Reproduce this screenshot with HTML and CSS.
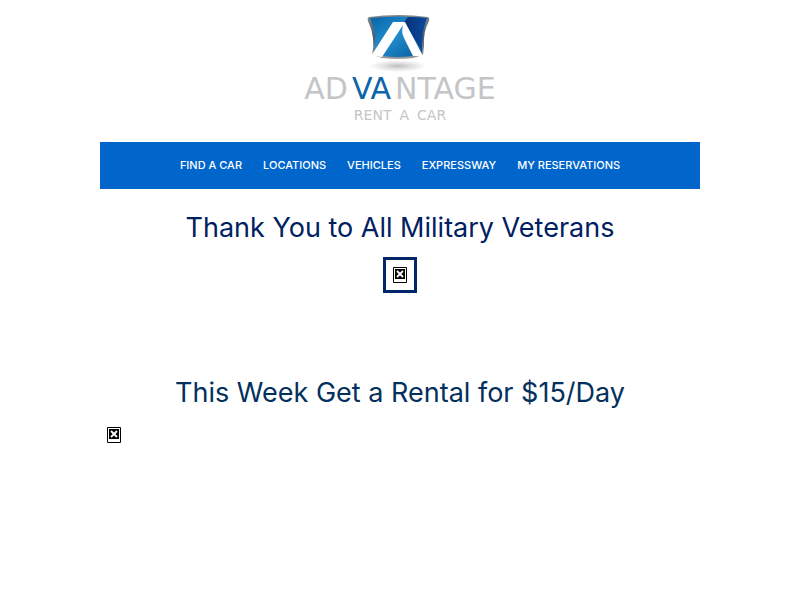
FILE: index.html
```
<!DOCTYPE html>
<html lang="en">
<head>
<meta charset="utf-8">
<meta name="viewport" content="width=device-width, initial-scale=1">
<title>Advantage Rent A Car</title>
<link rel="stylesheet" href="styles.css">
</head>
<body>
<div class="page">
  <header class="brand">
    <svg class="emblem" viewBox="0 0 72 60" aria-hidden="true">
      <defs>
        <linearGradient id="rim" x1="0" y1="0" x2="0" y2="1">
          <stop offset="0" stop-color="#85898c"/>
          <stop offset="0.5" stop-color="#4c5a68"/>
          <stop offset="1" stop-color="#9a9c9e"/>
        </linearGradient>
        <linearGradient id="face" x1="0" y1="0" x2="1" y2="1">
          <stop offset="0" stop-color="#0862a6"/>
          <stop offset="0.45" stop-color="#218dce"/>
          <stop offset="1" stop-color="#075795"/>
        </linearGradient>
        <linearGradient id="side" x1="0" y1="0" x2="1" y2="0">
          <stop offset="0" stop-color="#073178"/>
          <stop offset="1" stop-color="#0a4b9c"/>
        </linearGradient>
        <radialGradient id="shadow">
          <stop offset="0" stop-color="#bdbdbd"/>
          <stop offset="0.5" stop-color="#e2e2e2"/>
          <stop offset="1" stop-color="#ffffff"/>
        </radialGradient>
      </defs>
      <ellipse cx="34" cy="54" rx="29" ry="6" fill="url(#shadow)"/>
      <path d="M5 5Q34 1 64 5Q66 6 65 9Q59 20 60 34L59 43L49 46Q34 48 18 46L8 43Q12 26 4 9Q3 6 5 5Z" fill="url(#rim)"/>
      <path d="M6 6Q34 3 63 6Q57 20 58 41L48 44Q34 46 19 44L10 39Q14 24 6 6Z" fill="url(#face)"/>
      <path d="M44 5Q55 5 63 6Q57 20 58 39L40 10Z" fill="url(#side)"/>
      <path d="M29 10H41L59 44H49L40 26Q37 20 39 13L18 45L7 44Z" fill="#fff"/>
    </svg>
    <div class="wordmark"><span>AD</span><span class="wordmark-blue">VA</span><span>NTAGE</span></div>
    <div class="tagline"><span>RENT</span> <span>A</span> <span>CAR</span></div>
  </header>
  <nav class="menu">
    <a href="#find">FIND A CAR</a>
    <a href="#locations">LOCATIONS</a>
    <a href="#vehicles">VEHICLES</a>
    <a href="#expressway">EXPRESSWAY</a>
    <a href="#reservations">MY RESERVATIONS</a>
  </nav>
  <main>
    <section class="offer">
      <h1>Thank You to All Military Veterans</h1>
      <div class="framed">
        <svg class="missing" viewBox="0 0 14 16" aria-hidden="true"><path d="M.5 .5H13.5V15.5H.5Z" fill="#fff" stroke="#000"/><path d="M2 2H12V12H2Z"/><path d="M4 4L10 10M10 4L4 10" stroke="#fff" stroke-width="1.8"/></svg>
      </div>
    </section>
    <section class="offer weekly">
      <h2>This Week Get a Rental for $15/Day</h2>
      <div class="banner">
        <svg class="missing" viewBox="0 0 14 16" aria-hidden="true"><path d="M.5 .5H13.5V15.5H.5Z" fill="#fff" stroke="#000"/><path d="M2 2H12V12H2Z"/><path d="M4 4L10 10M10 4L4 10" stroke="#fff" stroke-width="1.8"/></svg>
      </div>
    </section>
  </main>
</div>
</body>
</html>
```
FILE: styles.css
```
* { box-sizing: border-box; }
body {
  margin: 0;
  background: #fff;
  font-family: Inter, "Open Sans", sans-serif;
}
.page {
  max-width: 600px;
  margin: 0 auto;
}
.brand {
  display: flex;
  flex-direction: column;
  align-items: center;
  padding: 12px 0 18px;
  color: #c4c5c7;
  font-family: "DejaVu Sans", sans-serif;
}
.emblem {
  display: block;
  width: 72px;
  height: 60px;
}
.wordmark {
  display: flex;
  gap: 4px;
  font-size: 30px;
  line-height: 34px;
}
.wordmark-blue { color: #0c65a9; }
.tagline {
  display: flex;
  gap: 8px;
  font-size: 14px;
  line-height: 18px;
}
.menu {
  display: flex;
  flex-wrap: wrap;
  justify-content: center;
  gap: 4px 21px;
  padding: 16px;
  background: #06c;
}
.menu a {
  color: #fff;
  font-size: 11px;
  font-weight: 500;
  line-height: 15px;
  text-decoration: none;
}
.offer {
  padding-top: 21px;
  text-align: center;
}
h1, h2 {
  margin: 0;
  color: #002060;
  font-size: 27px;
  font-weight: 400;
  line-height: 36px;
}
h2 { color: #03305c; }
.framed {
  width: fit-content;
  margin: 11px auto 0;
  padding: 7px;
  border: 3px solid #002868;
}
.missing {
  display: block;
  width: 14px;
  height: 16px;
}
.weekly { padding-top: 82px; }
.banner { padding: 16px 7px; }
```
